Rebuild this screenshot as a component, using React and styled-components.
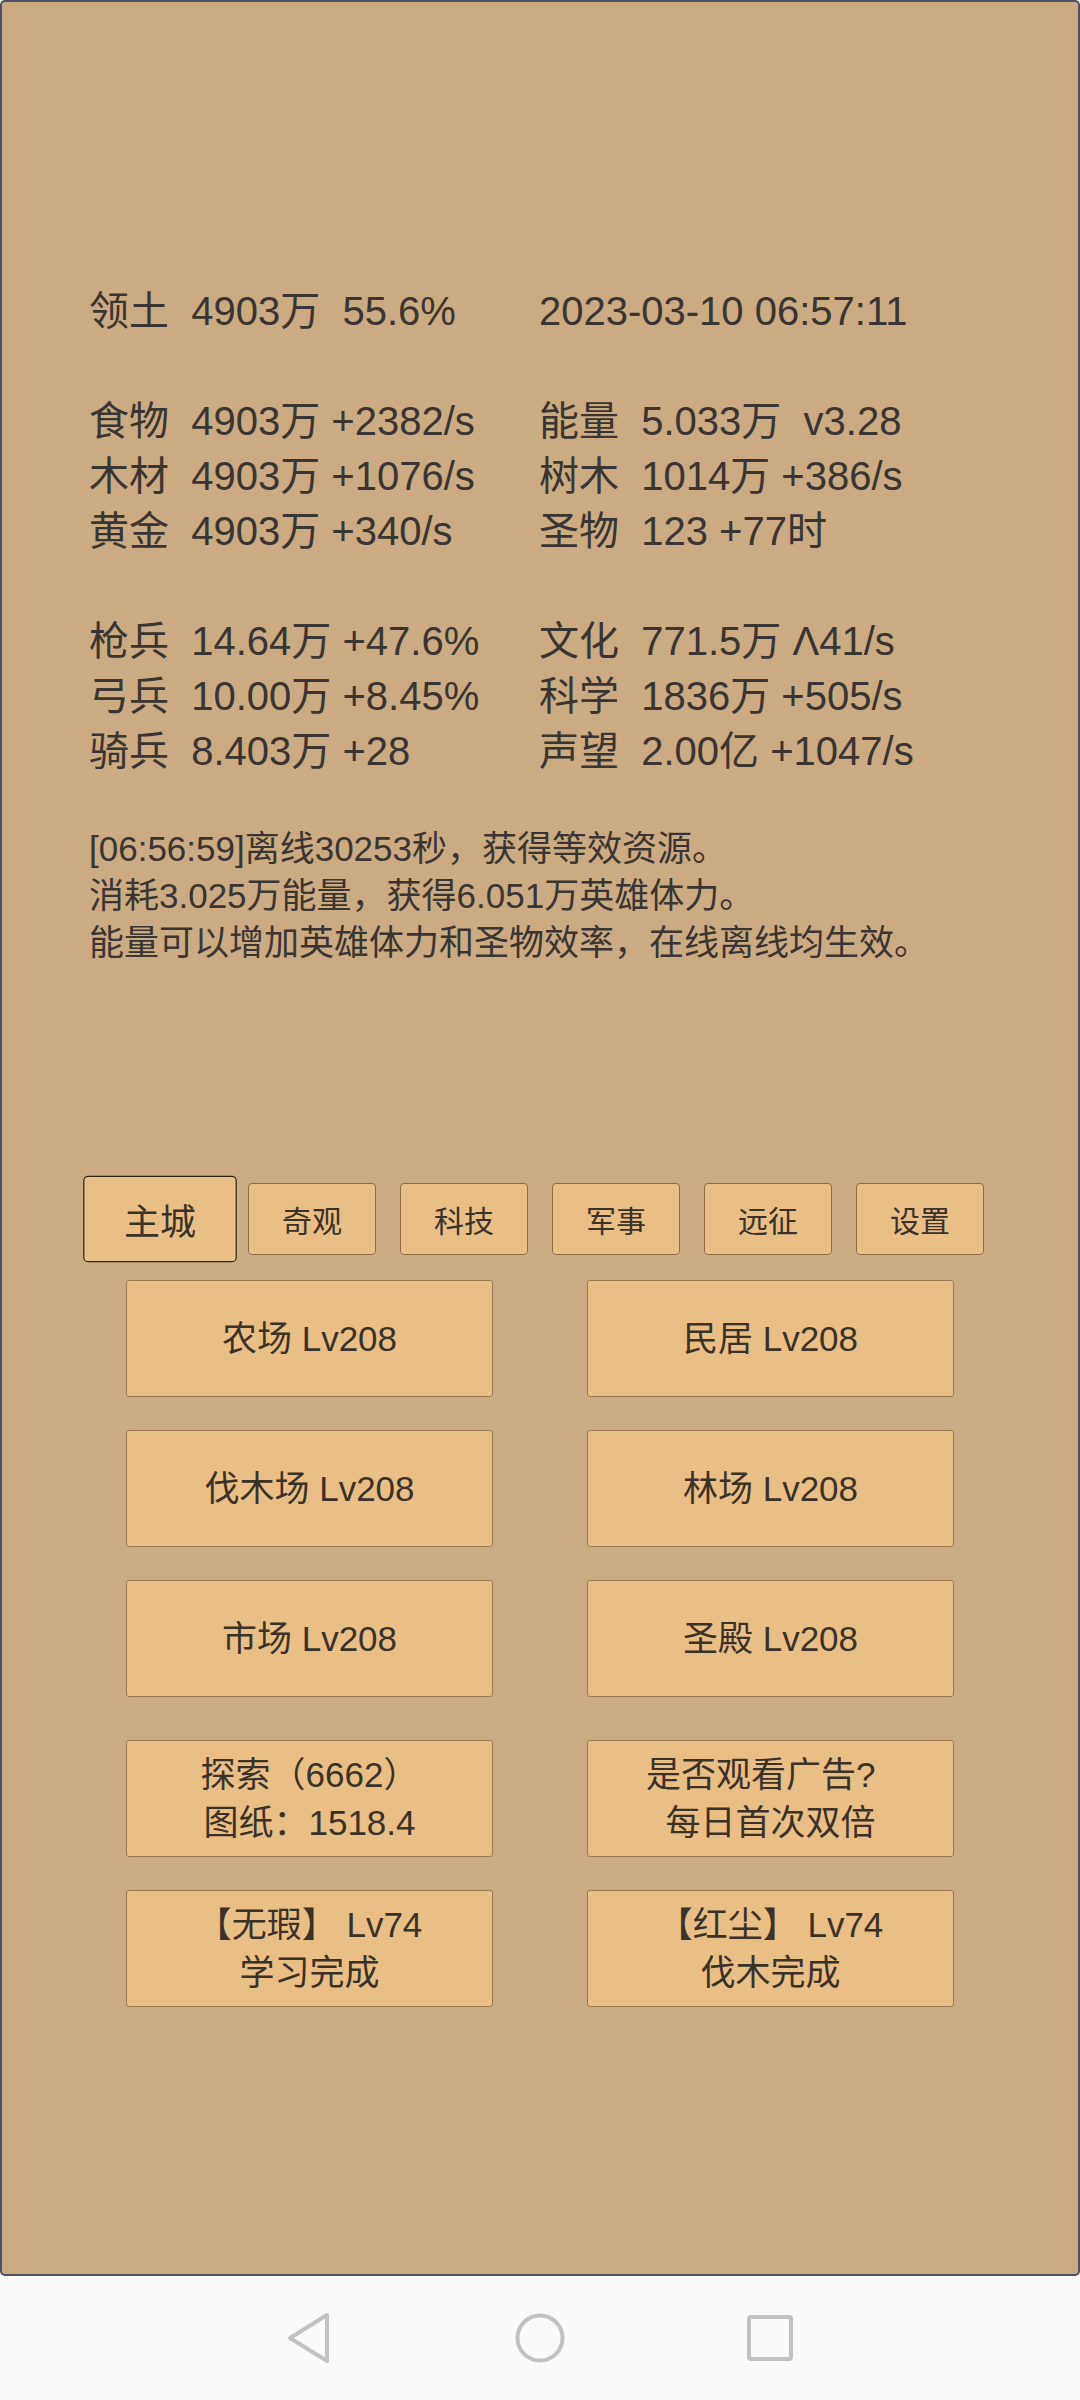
import React from "react";
import styled, { createGlobalStyle } from "styled-components";

const GlobalStyle = createGlobalStyle`
  html, body {
    margin: 0;
    padding: 0;
    background: #fafafa;
  }
  body {
    font-family: "Liberation Sans", "Noto Sans CJK SC", sans-serif;
  }
`;

const Screen = styled.div`
  width: 1080px;
  height: 2400px;
  display: flex;
  flex-direction: column;
  overflow: hidden;
`;

const Frame = styled.main`
  box-sizing: border-box;
  height: 2276px;
  flex: none;
  background: #cbab81;
  border: 2px solid #4d5266;
  border-radius: 5px;
  padding-top: 282px;
  display: flex;
  flex-direction: column;
  color: #383532;
`;

const InfoSection = styled.section`
  padding-left: 87px;
`;

const StatsGrid = styled.div`
  display: grid;
  grid-template-columns: 450px auto;
  grid-auto-rows: 55px;
  font-size: 40px;
  line-height: 55px;
`;

const StatCell = styled.div`
  white-space: pre;
`;

const BlankRow = styled.div`
  grid-column: 1 / -1;
`;

const LogBlock = styled.div`
  margin-top: 46px;
  font-size: 35px;
  line-height: 47px;
`;

const LogLine = styled.div`
  white-space: pre;
`;

const TabBar = styled.nav`
  margin-top: 217px;
  display: flex;
  justify-content: center;
  gap: 24px;
`;

const Tab = styled.div`
  box-sizing: border-box;
  width: 128px;
  height: 72px;
  display: flex;
  align-items: center;
  justify-content: center;
  background: #e9bf86;
  border: 1.5px solid ${(p) => (p.$active ? "#2f2414" : "#8f6e45")};
  border-radius: 4px;
  font-size: 30px;
  color: #3b3226;
  transform: ${(p) => (p.$active ? "scale(1.2)" : "none")};
  position: relative;
  z-index: ${(p) => (p.$active ? 1 : 0)};
`;

const ButtonGrid = styled.div`
  margin-top: ${(p) => p.$top}px;
  display: grid;
  grid-template-columns: repeat(2, 367px);
  grid-auto-rows: 117px;
  column-gap: 94px;
  row-gap: 33px;
  justify-content: center;
`;

const ActionButton = styled.div`
  box-sizing: border-box;
  display: flex;
  align-items: center;
  justify-content: center;
  text-align: center;
  white-space: pre;
  background: #e9bf86;
  border: 1.5px solid #9a7950;
  border-radius: 3px;
  font-size: 35px;
  line-height: 48px;
  color: #3b3226;
`;

const NavBar = styled.footer`
  flex: 1;
  background: #fafafa;
  display: flex;
  align-items: center;
  justify-content: center;
  gap: 171px;
`;

const NavIcon = styled.svg`
  width: 60px;
  height: 60px;
  display: block;
`;

const stats = [
  ["领土  4903万  55.6%", "2023-03-10 06:57:11"],
  null,
  ["食物  4903万 +2382/s", "能量  5.033万  v3.28"],
  ["木材  4903万 +1076/s", "树木  1014万 +386/s"],
  ["黄金  4903万 +340/s", "圣物  123 +77时"],
  null,
  ["枪兵  14.64万 +47.6%", "文化  771.5万 Λ41/s"],
  ["弓兵  10.00万 +8.45%", "科学  1836万 +505/s"],
  ["骑兵  8.403万 +28", "声望  2.00亿 +1047/s"],
];

const logLines = [
  "[06:56:59]离线30253秒，获得等效资源。",
  "消耗3.025万能量，获得6.051万英雄体力。",
  "能量可以增加英雄体力和圣物效率，在线离线均生效。",
];

const tabs = ["主城", "奇观", "科技", "军事", "远征", "设置"];

const buildings = [
  "农场 Lv208",
  "民居 Lv208",
  "伐木场 Lv208",
  "林场 Lv208",
  "市场 Lv208",
  "圣殿 Lv208",
];

const actions = [
  "探索（6662）\n图纸：1518.4",
  "是否观看广告?  \n每日首次双倍",
  "【无瑕】 Lv74\n学习完成",
  "【红尘】 Lv74\n伐木完成",
];

const ICON = "#c2c2c2";

export default function App() {
  return (
    <Screen>
      <GlobalStyle />
      <Frame>
        <InfoSection>
          <StatsGrid>
            {stats.map((row, i) =>
              row ? (
                <React.Fragment key={i}>
                  <StatCell>{row[0]}</StatCell>
                  <StatCell>{row[1]}</StatCell>
                </React.Fragment>
              ) : (
                <BlankRow key={i} />
              )
            )}
          </StatsGrid>
          <LogBlock>
            {logLines.map((l) => (
              <LogLine key={l}>{l}</LogLine>
            ))}
          </LogBlock>
        </InfoSection>

        <TabBar>
          {tabs.map((t, i) => (
            <Tab key={t} $active={i === 0}>
              {t}
            </Tab>
          ))}
        </TabBar>

        <ButtonGrid $top={25}>
          {buildings.map((b) => (
            <ActionButton key={b}>{b}</ActionButton>
          ))}
        </ButtonGrid>

        <ButtonGrid $top={43}>
          {actions.map((a) => (
            <ActionButton key={a}>{a}</ActionButton>
          ))}
        </ButtonGrid>
      </Frame>

      <NavBar>
        <NavIcon viewBox="0 0 60 60">
          <polygon
            points="48,7 11,30 48,53"
            fill="none"
            stroke={ICON}
            strokeWidth="4"
            strokeLinejoin="round"
          />
        </NavIcon>
        <NavIcon viewBox="0 0 60 60">
          <circle cx="30" cy="30" r="22.5" fill="none" stroke={ICON} strokeWidth="4" />
        </NavIcon>
        <NavIcon viewBox="0 0 60 60">
          <rect x="8" y="9" width="42" height="42" rx="2" fill="none" stroke={ICON} strokeWidth="4" />
        </NavIcon>
      </NavBar>
    </Screen>
  );
}
